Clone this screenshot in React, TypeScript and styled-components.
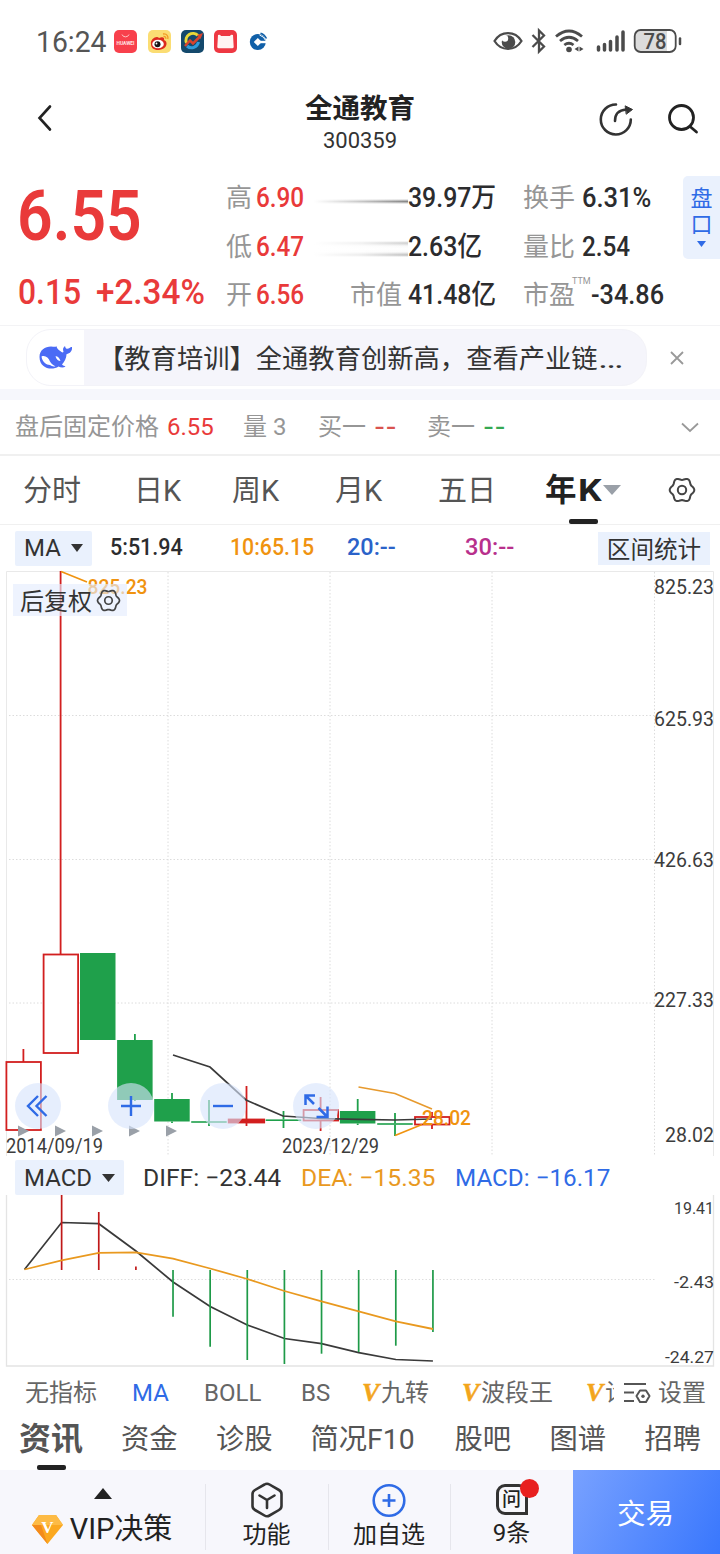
import React from "react";
import styled, { createGlobalStyle, css } from "styled-components";

const RED = "#e93a3a";
const GREEN = "#1fa04b";
const BLUE = "#2f6be6";
const ORANGE = "#f0930f";
const INK = "#2c2c2e";
const GREY = "#969696";

const Global = createGlobalStyle`
  * { box-sizing: border-box; }
  body { margin: 0; background: #fff; }
`;

const Page = styled.div`
  width: 720px;
  height: 1554px;
  overflow: hidden;
  display: flex;
  flex-direction: column;
  background: #fff;
  color: ${INK};
  font-family: Roboto, "Noto Sans CJK SC", sans-serif;
  white-space: nowrap;
  svg { display: block; flex: none; overflow: visible; }
`;

/* Narrow figures: a horizontal squeeze applied from the left edge. */
const squeeze = css<{ $sx?: number }>`
  display: inline-block;
  transform-origin: 0 50%;
  transform: scaleX(${(p) => p.$sx ?? 1});
`;

/* ---------- status bar ---------- */
const StatusBar = styled.header`
  height: 82px;
  flex: none;
  display: flex;
  align-items: center;
  justify-content: space-between;
  padding: 0 38px 0 36px;
`;
const StatusSide = styled.div<{ $gap: number }>`
  display: flex;
  align-items: center;
  gap: ${(p) => p.$gap}px;
`;
const Clock = styled.span`
  width: 68px;
  font-size: 29.5px;
  line-height: 34px;
  padding-top: 1px;
  color: #555;
  ${squeeze}
`;

/* ---------- title ---------- */
const TitleBar = styled.div`
  height: 80px;
  flex: none;
  display: grid;
  grid-template-columns: 160px 1fr 160px;
  align-items: center;
`;
const BackCell = styled.div`
  padding: 0 0 8px 37px;
`;
const TitleCell = styled.div`
  text-align: center;
  padding-top: 9px;
`;
const StockName = styled.h1`
  margin: 0;
  font-size: 27.5px;
  line-height: 34px;
  font-weight: 700;
  color: #222;
`;
const StockCode = styled.div`
  font-size: 22px;
  line-height: 30px;
  padding-bottom: 6px;
  color: #333;
`;
const TitleActions = styled.div`
  display: flex;
  gap: 34px;
  padding: 0 0 6px 38px;
  align-items: center;
`;

/* ---------- quote ---------- */
const Quote = styled.section`
  height: 163px;
  flex: none;
  display: grid;
  grid-template-columns: 226px 124px 173px 160px 37px;
`;
const PriceCell = styled.div`
  padding: 13px 0 0 17px;
  color: ${RED};
`;
const Price = styled.div`
  font-size: 70px;
  line-height: 82px;
  font-weight: 600;
  ${squeeze}
`;
const Change = styled.div`
  display: grid;
  grid-template-columns: 78px 110px;
  margin: 15px 0 0 1px;
  font-size: 35px;
  line-height: 42px;
  font-weight: 500;
`;
const Squeezed = styled.span`
  ${squeeze}
`;
const StatColumn = styled.div`
  display: grid;
  grid-template-rows: repeat(3, 48.5px);
  padding-top: 12px;
`;
const Stat = styled.div<{ $label: number }>`
  display: grid;
  grid-template-columns: ${(p) => p.$label}px 1fr;
  align-items: center;
`;
const StatLabel = styled.span`
  font-size: 26px;
  line-height: 48px;
  color: ${GREY};
  position: relative;
`;
const StatValue = styled.span<{ $red?: boolean }>`
  font-size: 27px;
  line-height: 48px;
  font-weight: 500;
  color: ${(p) => (p.$red ? RED : INK)};
  ${squeeze}
`;
const Ttm = styled.sup`
  position: absolute;
  left: 49px;
  top: 4px;
  font-size: 9px;
  line-height: 12px;
`;
const Smear = styled.span<{ $double?: boolean }>`
  width: 94px;
  margin-left: -36px;
  height: ${(p) => (p.$double ? 16 : 5)}px;
  margin-top: ${(p) => (p.$double ? 5 : 7)}px;
  background: ${(p) =>
    p.$double
      ? `linear-gradient(90deg, #fff, rgba(255, 255, 255, 0.7) 50%, transparent), linear-gradient(180deg, #fff, #cdcdcd 2px, #fafafa 5px, #fff 8px, #fafafa 11px, #bcbcbc 14px, #fff)`
      : `linear-gradient(90deg, #fff, rgba(255, 255, 255, 0.6) 45%, transparent), linear-gradient(180deg, #fff, #858585 50%, #fff)`};
`;
const DepthTab = styled.aside`
  height: 83px;
  margin-top: 14px;
  padding-top: 10px;
  background: #eaf1fd;
  border-radius: 5px 0 0 5px;
  color: ${BLUE};
  font-size: 22px;
  line-height: 25.5px;
  display: flex;
  flex-direction: column;
  align-items: center;
  svg { margin-top: 4px; }
`;

/* ---------- news banner ---------- */
const Banner = styled.section`
  height: 75px;
  flex: none;
  display: flex;
  align-items: center;
  border-top: 1px solid #f3f3f5;
  border-bottom: 11px solid #f6f7fc;
  padding: 0 0 0 26px;
`;
const Pill = styled.div`
  width: 621px;
  height: 57px;
  display: flex;
  border-radius: 25px;
  background: #f5f5fb;
  overflow: hidden;
  border: 1px solid #f3f3f8;
`;
const PillLogo = styled.div`
  width: 57px;
  background: #fff;
  padding: 14px 0 0 11px;
`;
const Headline = styled.div`
  padding-left: 14px;
  font-size: 26.3px;
  line-height: 58px;
  color: #333;
`;
const Ellipsis = styled.span`
  display: inline-block;
  transform-origin: 0 50%;
  transform: scaleX(1.45);
`;
const CloseWrap = styled.div`
  margin-left: 23px;
`;

/* ---------- after-hours ---------- */
const AfterHours = styled.section`
  height: 54px;
  flex: none;
  display: grid;
  grid-template-columns: 15px 152px 76px 75px 109px 254px 20px;
  align-items: center;
  font-size: 24px;
  color: ${GREY};
`;
const HoursLabel = styled.span`
  line-height: 30px;
`;
const Tone = styled.span<{ $c: string }>`
  color: ${(p) => p.$c};
`;
const Dashes = styled.span<{ $c: string }>`
  margin-left: 8px;
  font: 500 24px/28px Inter, sans-serif;
  letter-spacing: 0.5px;
  color: ${(p) => p.$c};
`;

/* ---------- period tabs ---------- */
const PeriodTabs = styled.nav`
  height: 71px;
  flex: none;
  display: grid;
  grid-template-columns: 23px 111px 98px 103px 103px 107px 123px 52px;
  border-top: 2px solid #f0f0f0;
  border-bottom: 1px solid #f0f0f0;
  line-height: 71px;
`;
const Period = styled.span`
  font-size: 29px;
  height: 68px;
  color: #555;
`;
const ActivePeriod = styled.span`
  display: flex;
  height: 68px;
  align-items: center;
  font-size: 31.5px;
  font-weight: 700;
  color: #222;
  position: relative;
  svg { margin-left: 1px; }
  &::after {
    content: "";
    position: absolute;
    left: 24px;
    bottom: 0;
    width: 29px;
    height: 5px;
    border-radius: 2px;
    background: #222;
  }
`;
const ActiveK = styled.span`
  margin-left: 1px;
  width: 24px;
  ${squeeze}
`;
const TabIcon = styled.span`
  padding-top: 20px;
`;

/* ---------- indicator legends ---------- */
const Legend = styled.div<{ $cols: string; $h: number; $end?: boolean }>`
  height: ${(p) => p.$h}px;
  flex: none;
  display: grid;
  grid-template-columns: ${(p) => p.$cols};
  align-items: ${(p) => (p.$end ? "end" : "center")};
  line-height: 36px;
`;
const Picker = styled.button<{ $w: number }>`
  width: ${(p) => p.$w}px;
  height: 35px;
  border: 0;
  padding: 0 9px;
  display: flex;
  align-items: center;
  justify-content: space-between;
  background: #eaf1fd;
  border-radius: 2px;
  font: 24px/36px Roboto, "Noto Sans CJK SC", sans-serif;
  color: #333;
`;
const MaValue = styled.span<{ $c: string }>`
  font-size: 23px;
  font-weight: 500;
  color: ${(p) => p.$c};
  ${squeeze}
`;
const MacdValue = styled.span<{ $c: string }>`
  font-size: 24px;
  line-height: 34px;
  color: ${(p) => p.$c};
  ${squeeze}
`;
const RangeButton = styled.button`
  width: 112px;
  height: 33px;
  border: 0;
  padding: 0;
  background: #eaf1fd;
  font: 23.6px/33px "Noto Sans CJK SC", sans-serif;
  color: #333;
`;

/* ---------- charts ---------- */
const KChart = styled.div`
  height: 585px;
  flex: none;
  position: relative;
`;
const AdjustChip = styled.button`
  position: absolute;
  left: 13px;
  top: 13px;
  width: 114px;
  height: 32px;
  border: 0;
  padding: 0 6px 0 7px;
  display: flex;
  align-items: center;
  justify-content: space-between;
  background: rgba(228, 237, 253, 0.64);
  font: 24px/32px "Noto Sans CJK SC", sans-serif;
  color: #333;
`;
const ZoomControls = styled.div`
  position: absolute;
  left: 15px;
  top: 512px;
  display: flex;
  gap: 46.7px;
`;
const RoundButton = styled.button`
  width: 46px;
  height: 46px;
  border: 0;
  padding: 0;
  border-radius: 50%;
  background: rgba(215, 228, 252, 0.62);
`;
const MacdChart = styled.div`
  height: 172px;
  flex: none;
`;

/* ---------- bottom ---------- */
const IndicatorTabs = styled.nav`
  height: 50px;
  flex: none;
  display: grid;
  grid-template-columns: 25px 107px 72px 97px 61px 100px 124px 28px 9px 35px 62px;
  align-items: center;
  font-size: 24px;
  line-height: 50px;
  padding-top: 1px;
  color: #666;
`;
const IndicatorItem = styled.span<{ $on?: boolean; $clip?: boolean }>`
  color: ${(p) => (p.$on ? BLUE : "inherit")};
  overflow: ${(p) => (p.$clip ? "hidden" : "visible")};
`;
const VMark = styled.span`
  display: inline-block;
  width: 19px;
  font-family: "Liberation Serif", serif;
  font-size: 26px;
  font-style: italic;
  font-weight: 700;
  line-height: 30px;
  color: #f3a51c;
  -webkit-text-stroke: 0.5px #f3a51c;
`;
const SectionTabs = styled.nav`
  height: 53px;
  flex: none;
  display: grid;
  grid-template-columns: 19px 102px 95px 94.5px 144px 95px 95px 75px;
  line-height: 45px;
  color: #555;
`;
const Section = styled.span`
  font-size: 28.3px;
`;
const ActiveSection = styled.span`
  font-size: 32px;
  font-weight: 700;
  position: relative;
  &::after {
    content: "";
    position: absolute;
    left: 18px;
    bottom: 0;
    width: 29px;
    height: 5px;
    border-radius: 2px;
    background: #222;
  }
`;
const ActionBar = styled.footer`
  height: 85px;
  flex: none;
  display: grid;
  grid-template-columns: 205px 123px 122px 123px 147px;
  background: #f7f7fc;
`;
const Action = styled.div`
  display: flex;
  flex-direction: column;
  align-items: center;
  padding-top: 12px;
  position: relative;
  font-size: 24px;
  line-height: 32px;
  color: #222;
  & + &::before {
    content: "";
    position: absolute;
    left: 0;
    top: 14px;
    width: 1px;
    height: 66px;
    background: #e6e6ec;
  }
`;
const VipCaret = styled.div`
  padding-top: 6px;
`;
const VipRow = styled.div`
  display: flex;
  align-items: center;
  gap: 7px;
  margin: 10px 1px 0 0;
  font-size: 29px;
  line-height: 40px;
`;
const ActionText = styled.span`
  margin-top: 1px;
`;
const AskIcon = styled.span`
  width: 32px;
  height: 31px;
  margin: 2px 0 1px;
  border: 3px solid #333;
  border-radius: 9px 9px 0 9px;
  font-size: 19px;
  line-height: 25px;
  font-weight: 500;
  text-align: center;
  position: relative;
`;
const Badge = styled.i`
  position: absolute;
  right: -14px;
  top: -8px;
  width: 19px;
  height: 19px;
  border-radius: 50%;
  background: #e8201f;
`;
const Trade = styled.button`
  border: 0;
  padding: 0 2px 2px 0;
  background: linear-gradient(115deg, #78a1ff, #3977fd);
  color: #fff;
  font: 28.5px/40px "Noto Sans CJK SC", sans-serif;
`;

/* ---------- icons ---------- */
const Caret = ({ w = 13, h = 8, c = "#333", up = false }: { w?: number; h?: number; c?: string; up?: boolean }) => (
  <svg width={w} height={h} viewBox="0 0 10 10" preserveAspectRatio="none">
    <path d={up ? "M0 10L5 0L10 10z" : "M0 0L10 0L5 10z"} fill={c} />
  </svg>
);

/* Six-lobed cog outline. */
const cog = Array.from({ length: 72 }, (_, i) => {
  const a = (i * Math.PI) / 36;
  const r = 11.2 + 1.1 * Math.cos(6 * a);
  return `${(14 + r * Math.cos(a)).toFixed(2)},${(14 + r * Math.sin(a)).toFixed(2)}`;
}).join(" ");

const Gear = ({ s, w = 2 }: { s: number; w?: number }) => (
  <svg width={s} height={s} viewBox="0 0 28 28" fill="none" stroke="#444" strokeWidth={w} strokeLinejoin="round">
    <polygon points={cog} />
    <circle cx="14" cy="14" r="4.2" />
  </svg>
);

const AppIcons = () => (
  <>
    <svg width="23" height="23" viewBox="0 0 23 23">
      <rect width="23" height="23" rx="5" fill="#f8404c" />
      <path d="M8 4.5a3.7 3.5 0 0 0 7 0" fill="none" stroke="#ffc4c4" strokeWidth="1" />
      <text x="2.5" y="15.2" fontSize="5" fontWeight="700" fill="#ffe3e3" textLength="18" lengthAdjust="spacingAndGlyphs">HUAWEI</text>
    </svg>
    <svg width="23" height="23" viewBox="0 0 23 23">
      <rect width="23" height="23" rx="5" fill="#fbdd73" />
      <path d="M3 14C2 9 9 5 11 8c4-2 6 0 5 2 4 1 4 9-5 10-5 .3-8-2-8-6z" fill="#dc2a1d" />
      <ellipse cx="10" cy="14" rx="5.8" ry="4.3" fill="#fff" />
      <circle cx="9.5" cy="14.3" r="3" fill="#151515" />
      <circle cx="8.5" cy="13.5" r=".9" fill="#fff" />
      <path d="M15 4c4-.7 5.5 2.5 4.8 5M15.5 6.5c2-.2 2.6 1 2.3 2.3" fill="none" stroke="#f19a25" strokeWidth="1.3" />
    </svg>
    <svg width="23" height="23" viewBox="0 0 23 23">
      <rect width="23" height="23" rx="5" fill="#14496c" />
      <path d="M17 5.5A7 7 0 0 0 5.5 13" fill="none" stroke="#e8d838" strokeWidth="3" />
      <path d="M6 16A7 7 0 0 0 17.5 12" fill="none" stroke="#2f9bdc" strokeWidth="3" />
      <path d="M4 16L9 10.5L12 13.5L19 6.5" fill="none" stroke="#d8432e" strokeWidth="2.5" />
      <path d="M16 5L22 3L19.5 9z" fill="#d8432e" />
    </svg>
    <svg width="23" height="23" viewBox="0 0 23 23">
      <rect width="23" height="23" rx="5" fill="#ee3842" />
      <path d="M4 5Q6 4 7 6h9q1-2 3-1l.7 12q-.2 1.3-1.5 1.3H4.8Q3.5 18.3 3.3 17z" fill="#fff4f2" />
    </svg>
    <svg width="23" height="23" viewBox="0 0 23 23">
      <circle cx="10.8" cy="12" r="8" fill="#1160a8" />
      <path d="M12 10.8H20V13.2H12Z" fill="#fff" />
      <path d="M6.8 12L10.8 8L14.800 12L10.8 16z" fill="#fff" />
      <path d="M12.5 5q4.500 1.500 6.200 5.500" stroke="#fff" strokeWidth="1" fill="none" />
      <path d="M13.5 3.3q4 1.2 6 5.2" stroke="#1160a8" strokeWidth="1.5" fill="none" />
    </svg>
  </>
);

const SystemIcons = () => (
  <svg width="190" height="28" viewBox="492 27 190 28" fill="none" stroke="#4b4b4b">
    <path d="M494.5 41C501 30.500 515 30.500 521.5 41C515 51.500 501 51.500 494.5 41Z" strokeWidth="2.2" />
    <circle cx="508.500" cy="42" r="6.800" fill="#4b4b4b" stroke="none" />
    <circle cx="505" cy="38.500" r="3.200" fill="#fff" stroke="none" />
    <path d="M532.5 35L544 46.5L539 51.5V30.5L544 35.5L532.5 47" strokeWidth="2.3" />
    <path d="M556 36.5Q569 25.5 582 36.5M560 41Q569 33.5 578 41M564.3 45Q569 41.5 573.5 45" strokeWidth="2.8" />
    <circle cx="569" cy="49.5" r="2.8" fill="#4b4b4b" stroke="none" />
    <path d="M578.5 46.5v5l-4-2.5zM579.5 46.5v5l4-2.5z" fill="#4b4b4b" stroke="none" />
    <path d="M598.5 47v3M604.5 44.5v5.5M610.5 41.5v8.5M617 37v13M623 32v18" strokeWidth="3.5" strokeLinecap="round" />
    <path d="M640 30.5H667V51.5H640Q635 51.5 635 46.5V35.5Q635 30.5 640 30.5z" fill="#dcdcdc" stroke="none" />
    <rect x="634.7" y="30" width="41" height="22" rx="6" strokeWidth="1.8" />
    <path d="M680 38.5v5.5" strokeWidth="2.5" strokeLinecap="round" />
    <text x="643.5" y="48.8" fontSize="21.5" fontWeight="500" fill="#4b4b4b" stroke="none" textLength="23" lengthAdjust="spacingAndGlyphs">78</text>
  </svg>
);

const Whale = () => (
  <svg width="35" height="27" viewBox="0 0 35 27">
    <path
      d="M1.5 13C1.5 6 7 2.5 13 2.5C15.5 2.5 17 3.500 18.5 2.2C19 4 19.5 5 21.5 6.5C24 8.2 25 9.5 25.5 7.5C24.5 5.5 25 3.5 27 2C27.3 4 28.2 4.8 29.5 4.8C31 4.8 32.5 2.5 34 3C34.5 7 32 9.5 28.5 10.2C28.5 14 26.5 17.5 24 20.5C25 21.5 26.5 22 27.5 22.5C25.5 24 22.5 23.5 20.5 22.5C14 27 1.5 24.5 1.5 13Z"
      fill="#4b6bf5"
    />
    <path d="M3.5 12.500C7 11 10.500 13.500 12 17.500C13.500 20 15.500 21.500 17.500 22.200C15.500 22.800 13.500 22.200 12 21C8.500 21 4 17.500 3.500 12.500Z" fill="#fff" />
    <path d="M17.5 12.5C19.5 11.5 21.5 14 22.5 17C20.5 17 18.5 15.500 17.5 12.5Z" fill="#fff" />
  </svg>
);

/* ---------- chart data (chart coordinates) ---------- */
type Candle = { x: number; up?: boolean; top: number; bottom: number; hi: number; lo: number; solid?: boolean };
const candles: Candle[] = [
  { x: 23.4, up: true, top: 1062, bottom: 1130, hi: 1049, lo: 1130 },
  { x: 60.6, up: true, top: 954.5, bottom: 1053, hi: 571, lo: 1053 },
  { x: 97.8, top: 953, bottom: 1040, hi: 953, lo: 1040 },
  { x: 134.9, top: 1040, bottom: 1100, hi: 1034, lo: 1101 },
  { x: 172, top: 1099, bottom: 1121.5, hi: 1093, lo: 1123 },
  { x: 209, top: 1121.2, bottom: 1122.8, hi: 1100, lo: 1126 },
  { x: 246.5, up: true, top: 1119.5, bottom: 1122.5, hi: 1086, lo: 1126, solid: true },
  { x: 283.5, top: 1119.4, bottom: 1121, hi: 1111, lo: 1128 },
  { x: 320.6, up: true, top: 1110, bottom: 1120.5, hi: 1097, lo: 1131 },
  { x: 357.7, top: 1111, bottom: 1123.5, hi: 1099, lo: 1125 },
  { x: 395, top: 1123.2, bottom: 1124.8, hi: 1113, lo: 1136 },
  { x: 432, up: true, top: 1117, bottom: 1124.5, hi: 1112, lo: 1129 },
];
const diff = [1269.5, 1222.5, 1223.7, 1251, 1282, 1306.5, 1325, 1338.5, 1343.7, 1352.7, 1359.5, 1361];
const dea = [1269.5, 1260.3, 1252.9, 1252.3, 1258.7, 1268.5, 1279, 1291, 1301.3, 1311.3, 1321.3, 1329];
const bars = [0, 1195, 1212, 1266.5, 1316.7, 1346.7, 1360, 1364, 1353.7, 1352, 1345.7, 1332];
const macdX = (i: number) => 24.5 + 37.13 * i;
const line = (ys: number[]) => ys.map((y, i) => `${macdX(i)},${y}`).join(" ");

const CandleMark = ({ c }: { c: Candle }) => {
  const color = c.up ? "#d21f1f" : GREEN;
  const hollow = c.up && !c.solid;
  return (
    <g stroke={color} strokeWidth="1.8">
      <path d={`M${c.x} ${c.hi}V${c.top}M${c.x} ${c.bottom}V${c.lo}`} />
      <rect
        x={c.x - (hollow ? 17 : 17.8)}
        y={c.top}
        width={hollow ? 34.5 : 35.5}
        height={c.bottom - c.top}
        fill={hollow ? "#fff" : color}
        stroke={c.up ? color : "none"}
      />
    </g>
  );
};

const AxisText = ({
  y,
  w,
  children,
  size = 20,
  x = 714,
  c = "#3c3c3c",
}: {
  y: number;
  w: number;
  children: string;
  size?: number;
  x?: number;
  c?: string;
}) => (
  <text x={x - w} y={y + size * 0.355} fontSize={size} textLength={w} lengthAdjust="spacingAndGlyphs" fill={c}>
    {children}
  </text>
);

const KLine = () => (
  <svg width="720" height="585" viewBox="0 571 720 585">
    <path d="M6.5 1156V571.5H713.5V1156" fill="none" stroke="#e9e9e9" />
    <path
      d="M168 572V1156M330 572V1156M492 572V1156M654.5 572V1156M9 715.5H654M9 859.5H654M9 1003H654"
      stroke="#dcdcdc"
      strokeDasharray="1.5 2"
      fill="none"
    />
    {candles.map((c) => (
      <CandleMark key={c.x} c={c} />
    ))}
    <g fill="none" strokeWidth="1.7">
      <polyline points="173,1055 210,1067 246,1100 283,1116 320,1118.5 358,1119.3 395,1120 432,1119" stroke="#3a3a3a" />
      <polyline points="358.5,1087 395,1093.5 432,1109" stroke="#e79a2e" />
      <path d="M395 1135.5L422 1124.5M61 571.5L87 582" stroke={ORANGE} />
    </g>
    <g fill="#9aa0a8">
      {[18, 55, 92, 129, 166].map((x) => (
        <path key={x} d={`M${x} 1125.5L${x + 11} 1131L${x} 1136.5Z`} />
      ))}
    </g>
    <AxisText y={587} w={60}>825.23</AxisText>
    <AxisText y={719} w={60}>625.93</AxisText>
    <AxisText y={860} w={60}>426.63</AxisText>
    <AxisText y={1000} w={60}>227.33</AxisText>
    <AxisText y={1135} w={49}>28.02</AxisText>
    <AxisText x={103} y={1145.5} w={97}>2014/09/19</AxisText>
    <AxisText x={379} y={1145.5} w={97}>2023/12/29</AxisText>
    <g fontWeight="500">
      <AxisText x={471} y={1118} w={49} size={21} c={ORANGE}>28.02</AxisText>
      <AxisText x={147.5} y={587} w={60} size={21} c={ORANGE}>825.23</AxisText>
    </g>
  </svg>
);

const Macd = () => (
  <svg width="720" height="172" viewBox="0 1195 720 172">
    <path d="M6.5 1195V1366H713.5V1195" fill="none" stroke="#e4e4e4" strokeWidth="1.3" />
    <path d="M9 1279.5H656" stroke="#dedede" strokeDasharray="1.5 2" />
    <polyline points={line(diff)} fill="none" stroke="#3a3a3a" strokeWidth="1.7" />
    {bars.map((y, i) =>
      y ? <path key={i} d={`M${macdX(i)} 1270V${y}`} stroke={i < 4 ? "#c01818" : "#1e9a48"} strokeWidth="1.7" /> : null
    )}
    <polyline points={line(dea)} fill="none" stroke="#e9991f" strokeWidth="1.8" />
    <AxisText y={1208} w={40} size={17}>19.41</AxisText>
    <AxisText y={1282} w={40} size={17}>-2.43</AxisText>
    <AxisText y={1356.5} w={49} size={17}>-24.27</AxisText>
  </svg>
);

export default function App() {
  return (
    <Page>
      <Global />
      <StatusBar>
        <StatusSide $gap={10.3}>
          <Clock $sx={0.96}>16:24</Clock>
          <AppIcons />
        </StatusSide>
        <SystemIcons />
      </StatusBar>

      <TitleBar>
        <BackCell>
          <svg width="16" height="28" viewBox="0 0 16 28" fill="none" stroke="#222" strokeWidth="2.6" strokeLinecap="round">
            <path d="M13 2.5L2.5 14L13 25.5" />
          </svg>
        </BackCell>
        <TitleCell>
          <StockName>全通教育</StockName>
          <StockCode>300359</StockCode>
        </TitleCell>
        <TitleActions>
          <svg width="36" height="36" viewBox="598 101 36 36" fill="none" stroke="#333" strokeWidth="2.6" strokeLinecap="round">
            <path d="M616 104.5A15 15 0 1 0 630.8 119.5" />
            <path d="M615 121C615 113 619 110 626 109.5" />
            <path d="M625.5 106L632.5 109.5L626.5 114Z" fill="#333" strokeWidth="1" />
          </svg>
          <svg width="32" height="32" viewBox="0 0 32 32" fill="none" stroke="#222" strokeWidth="2.8" strokeLinecap="round">
            <circle cx="13.5" cy="14.5" r="12" />
            <path d="M22 23.5L28.5 29" />
          </svg>
        </TitleActions>
      </TitleBar>

      <Quote>
        <PriceCell>
          <Price $sx={0.892}>6.55</Price>
          <Change>
            <Squeezed $sx={0.91}>0.15</Squeezed>
            <Squeezed $sx={0.95}>+2.34%</Squeezed>
          </Change>
        </PriceCell>
        <StatColumn>
          <Stat $label={30}><StatLabel>高</StatLabel><StatValue $red $sx={0.9}>6.90</StatValue></Stat>
          <Stat $label={30}><StatLabel>低</StatLabel><StatValue $red $sx={0.9}>6.47</StatValue></Stat>
          <Stat $label={30}><StatLabel>开</StatLabel><StatValue $red $sx={0.9}>6.56</StatValue></Stat>
        </StatColumn>
        <StatColumn>
          <Stat $label={58}><Smear /><StatValue $sx={0.92}>39.97万</StatValue></Stat>
          <Stat $label={58}><Smear $double /><StatValue $sx={0.92}>2.63亿</StatValue></Stat>
          <Stat $label={58}><StatLabel>市值</StatLabel><StatValue $sx={0.92}>41.48亿</StatValue></Stat>
        </StatColumn>
        <StatColumn>
          <Stat $label={59}><StatLabel>换手</StatLabel><StatValue $sx={0.945}>6.31%</StatValue></Stat>
          <Stat $label={59}><StatLabel>量比</StatLabel><StatValue $sx={0.9}>2.54</StatValue></Stat>
          <Stat $label={68}><StatLabel>市盈<Ttm>TTM</Ttm></StatLabel><StatValue $sx={0.935}>-34.86</StatValue></Stat>
        </StatColumn>
        <DepthTab>
          <span>盘</span>
          <span>口</span>
          <Caret w={9} h={6} c={BLUE} />
        </DepthTab>
      </Quote>

      <Banner>
        <Pill>
          <PillLogo><Whale /></PillLogo>
          <Headline>【教育培训】全通教育创新高，查看产业链<Ellipsis>…</Ellipsis></Headline>
        </Pill>
        <CloseWrap>
          <svg width="14" height="14" viewBox="0 0 14 14" stroke="#999" strokeWidth="1.8">
            <path d="M1 1L13 13M13 1L1 13" />
          </svg>
        </CloseWrap>
      </Banner>

      <AfterHours>
        <span />
        <HoursLabel>盘后固定价格</HoursLabel>
        <Tone $c={RED}>6.55</Tone>
        <HoursLabel>量 3</HoursLabel>
        <HoursLabel>买一<Dashes $c="#d9534f">--</Dashes></HoursLabel>
        <HoursLabel>卖一<Dashes $c="#35a853">--</Dashes></HoursLabel>
        <svg width="18" height="11" viewBox="0 0 18 11" fill="none" stroke="#999" strokeWidth="1.8">
          <path d="M1 1.5L9 9L17 1.5" />
        </svg>
      </AfterHours>

      <PeriodTabs>
        <span />
        <Period>分时</Period>
        <Period>日K</Period>
        <Period>周K</Period>
        <Period>月K</Period>
        <Period>五日</Period>
        <ActivePeriod>年<ActiveK $sx={1.18}>K</ActiveK><Caret w={18} h={10} c="#9aa0a8" /></ActivePeriod>
        <TabIcon><Gear s={28} /></TabIcon>
      </PeriodTabs>

      <Legend $h={46} $cols="15px 95px 120px 117px 118px 133px 122px">
        <span />
        <Picker $w={77}>MA<Caret w={12} h={8} /></Picker>
        <MaValue $c={INK} $sx={0.935}>5:51.94</MaValue>
        <MaValue $c={ORANGE} $sx={0.925}>10:65.15</MaValue>
        <MaValue $c="#2b62c9" $sx={1.02}>20:--</MaValue>
        <MaValue $c="#b8308c" $sx={1.03}>30:--</MaValue>
        <RangeButton>区间统计</RangeButton>
      </Legend>

      <KChart>
        <KLine />
        <AdjustChip>后复权<Gear s={25} w={1.9} /></AdjustChip>
        <ZoomControls>
          <RoundButton>
            <svg width="46" height="46" viewBox="0 0 46 46" fill="none" stroke={BLUE} strokeWidth="2.4">
              <path d="M23 13L13 23L23 33M31.5 13L21.5 23L31.5 33" />
            </svg>
          </RoundButton>
          <RoundButton>
            <svg width="46" height="46" viewBox="0 0 46 46" stroke={BLUE} strokeWidth="2.4">
              <path d="M13 23H33M23 13V33" />
            </svg>
          </RoundButton>
          <RoundButton>
            <svg width="46" height="46" viewBox="0 0 46 46" stroke={BLUE} strokeWidth="2.4">
              <path d="M13 23H33" />
            </svg>
          </RoundButton>
          <RoundButton>
            <svg width="46" height="46" viewBox="0 0 46 46" fill="none" stroke={BLUE} strokeWidth="2.5">
              <path d="M12.5 22V12.5H22M12.5 12.5L21 21M34.5 23.5V34H23.5M34.5 34L25.5 25" />
            </svg>
          </RoundButton>
        </ZoomControls>
      </KChart>

      <Legend $h={39} $end $cols="15px 128px 158px 154px 1fr">
        <span />
        <Picker $w={109}>MACD<Caret w={13} h={8} /></Picker>
        <MacdValue $c="#333" $sx={1.027}>DIFF: −23.44</MacdValue>
        <MacdValue $c="#e9991f" $sx={1.027}>DEA: −15.35</MacdValue>
        <MacdValue $c={BLUE} $sx={1.01}>MACD: −16.17</MacdValue>
      </Legend>

      <MacdChart>
        <Macd />
      </MacdChart>

      <IndicatorTabs>
        <span />
        <IndicatorItem>无指标</IndicatorItem>
        <IndicatorItem $on>MA</IndicatorItem>
        <IndicatorItem>BOLL</IndicatorItem>
        <IndicatorItem>BS</IndicatorItem>
        <IndicatorItem><VMark>V</VMark>九转</IndicatorItem>
        <IndicatorItem><VMark>V</VMark>波段王</IndicatorItem>
        <IndicatorItem $clip><VMark>V</VMark>诊</IndicatorItem>
        <span />
        <svg width="28" height="22" viewBox="0 0 28 22" fill="none" stroke="#555" strokeWidth="2.2">
          <path d="M1 2H23M1 10.5H11M1 19H11" />
          <path d="M17 8.5H23L26.5 14L23 20H17L13.5 14Z" strokeWidth="2" strokeLinejoin="round" />
          <circle cx="20" cy="14.2" r="1.7" fill="#555" stroke="none" />
        </svg>
        <IndicatorItem>设置</IndicatorItem>
      </IndicatorTabs>

      <SectionTabs>
        <span />
        <ActiveSection>资讯</ActiveSection>
        <Section>资金</Section>
        <Section>诊股</Section>
        <Section>简况F10</Section>
        <Section>股吧</Section>
        <Section>图谱</Section>
        <Section>招聘</Section>
      </SectionTabs>

      <ActionBar>
        <Action>
          <VipCaret><Caret w={18} h={11} c="#222" up /></VipCaret>
          <VipRow>
            <svg width="31" height="29" viewBox="0 0 31 29">
              <path d="M7 0H24L31 10L15.5 29L0 10Z" fill="#fba81f" />
              <path d="M7 0H24L31 10H0Z" fill="#fdbb45" />
              <path d="M0 10L15.5 29L9 10Z" fill="#f38a1b" />
              <text x="15.5" y="18" fontFamily="Liberation Serif" fontSize="17" fontWeight="700" fill="#fff" textAnchor="middle">V</text>
            </svg>
            VIP决策
          </VipRow>
        </Action>
        <Action>
          <svg width="34" height="36" viewBox="0 0 34 36" fill="none" stroke="#333" strokeWidth="2.6" strokeLinejoin="round" strokeLinecap="round">
            <path d="M14.5 2.5Q17 1 19.5 2.5L29 8Q31.5 9.5 31.5 12V24Q31.5 26.5 29 28L19.5 33.5Q17 35 14.5 33.5L5 28Q2.5 26.5 2.5 24V12Q2.5 9.5 5 8Z" />
            <path d="M9.5 13.5L17 18L24.5 13.5M17 18V26" />
          </svg>
          <ActionText>功能</ActionText>
        </Action>
        <Action>
          <svg width="36" height="36" viewBox="0 0 36 36" fill="none" stroke={BLUE} strokeWidth="2.6">
            <circle cx="18" cy="18.5" r="15.3" />
            <path d="M18 12V25M11.5 18.5H24.5" />
          </svg>
          <ActionText>加自选</ActionText>
        </Action>
        <Action>
          <AskIcon>问<Badge /></AskIcon>
          <ActionText>9条</ActionText>
        </Action>
        <Trade>交易</Trade>
      </ActionBar>
    </Page>
  );
}
